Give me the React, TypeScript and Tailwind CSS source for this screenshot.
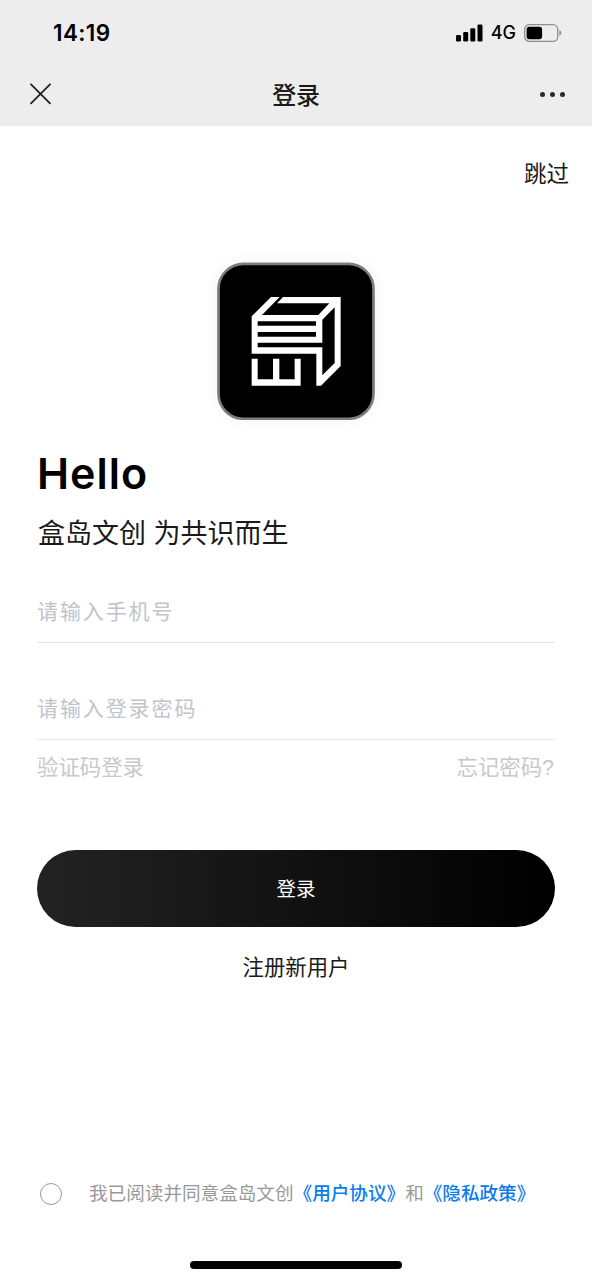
import { useState } from 'react';

const SignalIcon = () => (
  <svg width="27" height="18" viewBox="0 0 27 18">
    <rect x="0" y="11" width="5" height="6.5" rx="1.3" />
    <rect x="7.2" y="8" width="5" height="9.5" rx="1.3" />
    <rect x="14.3" y="4.3" width="5" height="13.2" rx="1.3" />
    <rect x="21.5" y="0.5" width="5" height="17" rx="1.3" />
  </svg>
);

const BatteryIcon = () => (
  <svg width="38" height="18" viewBox="0 0 38 18">
    <rect x="0.7" y="0.7" width="33" height="16.6" rx="4.6" fill="none" stroke="#8e8e8e" strokeWidth="1.3" />
    <rect x="2.6" y="2.8" width="15.5" height="12.4" rx="2.6" />
    <path d="M35.3 6.2c1.3.5 2 1.5 2 2.8s-.7 2.3-2 2.8z" fill="#8e8e8e" />
  </svg>
);

const Logo = () => (
  <svg width="158" height="158" viewBox="51 51 474 474">
    <rect x="55.5" y="56.5" width="465" height="465" rx="75" fill="#000" stroke="#7d7d7d" strokeWidth="8" />
    <path
      fill="#fff"
      fillRule="evenodd"
      d="M155 214L213 156H239L186 210H355L388 175H231L249 156H422V363L363 422H349V326H155ZM173 229V242H348V229ZM173 261V275H348V261ZM173 293V307H367V391L404 354V187L367 224V293Z"
    />
    <path fill="#fff" d="M155 341H173V403H219V341H238V403H284V341H302V422H155Z" />
  </svg>
);

export default function LoginPage() {
  const [phone, setPhone] = useState('');
  const [password, setPassword] = useState('');
  const [agreed, setAgreed] = useState(false);

  return (
    <div className="flex h-[1280px] w-[592px] flex-col bg-white font-['Liberation_Sans','Noto_Sans_CJK_SC',sans-serif] text-[#1a1a1a]">
      <header className="h-[126px] bg-[#ededed]">
        <div className="flex h-[65px] items-center justify-between pl-[53px] pr-[30px] text-black">
          <span className="font-['Inter',sans-serif] text-[22.5px] font-semibold tracking-[0.4px]">14:19</span>
          <div className="flex items-center gap-[8px]">
            <SignalIcon />
            <span className="pt-px font-['Inter',sans-serif] text-[18px] leading-[18px] font-medium">4G</span>
            <BatteryIcon />
          </div>
        </div>
        <div className="grid h-[59px] grid-cols-3 items-center px-[27px]">
          <button className="pb-px pl-[2px]">
            <svg width="22" height="22" viewBox="0 0 22 22" fill="none" stroke="#222" strokeWidth="1.8" strokeLinecap="round">
              <path d="M2 1.3l19 19M21 1.3l-19 19" />
            </svg>
          </button>
          <h1 className="pt-[3px] text-center text-[24px] leading-[34px] font-medium tracking-[-0.3px]">登录</h1>
          <button className="flex justify-end gap-[5px]">
            <span className="size-[5px] rounded-full bg-[#2a2a2a]" />
            <span className="size-[5px] rounded-full bg-[#2a2a2a]" />
            <span className="size-[5px] rounded-full bg-[#2a2a2a]" />
          </button>
        </div>
      </header>

      <div className="flex justify-end pt-[33px] pr-[23px]">
        <button className="text-[22.5px] leading-[32px]">跳过</button>
      </div>

      <div className="mx-auto mt-[71px] size-[158px] rounded-[26px] shadow-[0_0_16px_rgba(0,0,0,0.05)]">
        <Logo />
      </div>

      <main className="flex flex-1 flex-col px-[37px]">
        <h2 className="mt-[27px] font-['Inter',sans-serif] text-[43px] leading-[52px] font-semibold tracking-[1px] text-black">
          Hello
        </h2>
        <p className="mt-[15px] pl-px text-[27px] leading-[40px]">盒岛文创 为共识而生</p>

        <div className="mt-[29px] h-[60px] border-b border-[#e4e4e4]">
          <input
            value={phone}
            onChange={(e) => setPhone(e.target.value)}
            placeholder="请输入手机号"
            className="h-[58px] w-full text-[21px] tracking-[1.9px] outline-none placeholder:text-[#c0c4cc]"
          />
        </div>
        <div className="mt-[37px] h-[60px] border-b border-[#e4e4e4]">
          <input
            type="password"
            value={password}
            onChange={(e) => setPassword(e.target.value)}
            placeholder="请输入登录密码"
            className="h-[58px] w-full text-[21px] tracking-[1.9px] outline-none placeholder:text-[#c0c4cc]"
          />
        </div>
        <div className="mt-[12px] flex justify-between pr-px text-[21.4px] leading-[32px] text-[#c8c8c8]">
          <button>验证码登录</button>
          <button>忘记密码?</button>
        </div>

        <button className="mt-[66px] h-[77px] rounded-full bg-[linear-gradient(to_right,#232323,#000)] pt-[2px] text-[19.5px] text-white">
          登录
        </button>
        <button className="mt-[25px] self-center text-[21.4px] leading-[32px]">注册新用户</button>

        <label className="mt-auto mb-[53px] flex items-center pl-[3px] text-[18.6px] leading-[28px] text-[#999]">
          <input
            type="checkbox"
            checked={agreed}
            onChange={(e) => setAgreed(e.target.checked)}
            className="mr-[27px] size-[22px] appearance-none rounded-full border border-[#999] checked:bg-[#1a7ef0]"
          />
          <span className="whitespace-nowrap">
            我已阅读并同意盒岛文创<a className="font-medium text-[#0a7cf0]">《用户协议》</a>和<a className="font-medium text-[#0a7cf0]">《隐私政策》</a>
          </span>
        </label>
      </main>

      <div className="mx-auto mb-[11px] h-[8px] w-[212px] shrink-0 rounded-full bg-black" />
    </div>
  );
}
